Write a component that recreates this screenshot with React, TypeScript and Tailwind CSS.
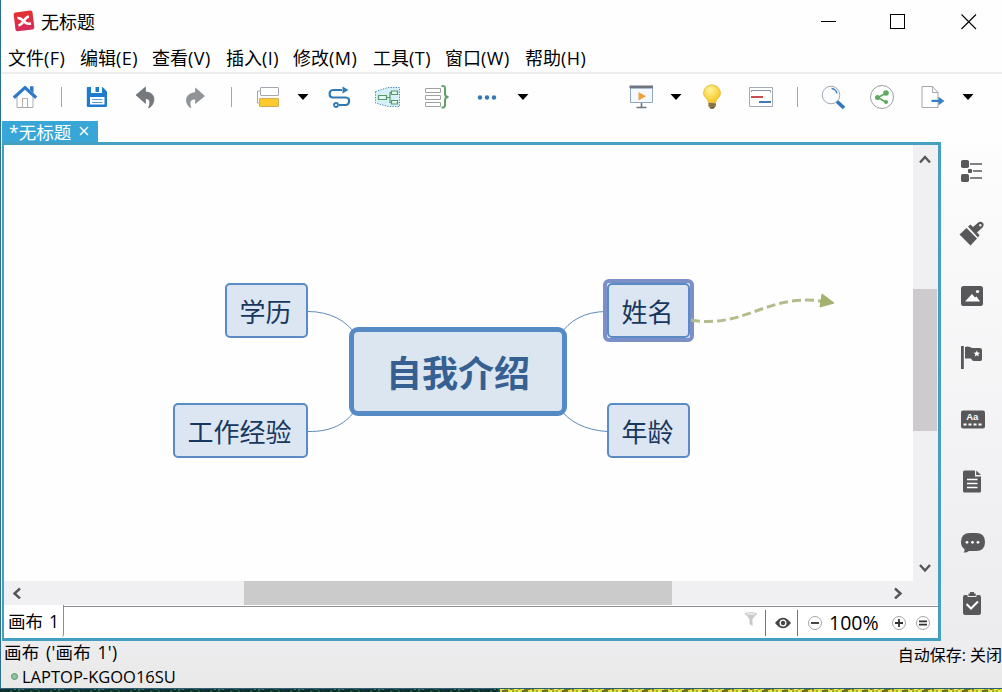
import type { ReactNode } from 'react'

const MENUS = [
  { label: '文件', hotkey: '(F)', width: 'w-[72px]' },
  { label: '编辑', hotkey: '(E)', width: 'w-[72px]' },
  { label: '查看', hotkey: '(V)', width: 'w-[74px]' },
  { label: '插入', hotkey: '(I)', width: 'w-[67px]' },
  { label: '修改', hotkey: '(M)', width: 'w-[80px]' },
  { label: '工具', hotkey: '(T)', width: 'w-[72px]' },
  { label: '窗口', hotkey: '(W)', width: 'w-[80px]' },
  { label: '帮助', hotkey: '(H)', width: 'w-[72px]' },
]

const STRIP_COLORS = ['#0d2b2c', '#12393a', '#1f5549', '#0e2e33', '#3a7761']
const STRIP_WARM = ['#d9dc3c', '#a5ac2a', '#eef04f', '#6c7524', '#dfe045']

function Ico({ w = 26, h = 26, children }: { w?: number; h?: number; children: ReactNode }) {
  return (
    <svg width={w} height={h} viewBox={`0 0 ${w} ${h}`} fill="none" className="block shrink-0">
      {children}
    </svg>
  )
}

function Caret({ className }: { className: string }) {
  return (
    <div className={className}>
      <Ico w={12} h={6}>
        <path d="M0.5 0H11.5L6 6Z" fill="#000" />
      </Ico>
    </div>
  )
}

function Divider({ className }: { className: string }) {
  return <div className={`h-5 w-px shrink-0 bg-[#a5a5a5] ${className}`} />
}

function TitleBar() {
  return (
    <div className="flex h-[43px] shrink-0 items-center pl-[12px]">
      <div className="mb-[2px]">
        <Ico w={22} h={22}>
          <defs>
            <linearGradient id="logo" x1="0" y1="0" x2="0" y2="1">
              <stop offset="0" stopColor="#e5302f" />
              <stop offset="1" stopColor="#d52c5c" />
            </linearGradient>
          </defs>
          <rect x="1.500" y="1.400" width="19" height="19" rx="2" fill="url(#logo)" transform="rotate(-7 11 11)" />
          <path d="M4.500 8C8 7.500 9.500 10 11.500 12C13 13.500 15.500 14 18 13.500M16 6.500C13 7 11.500 9.500 10 12C8.800 14 7.500 15 5.500 15.500" stroke="#fff" strokeWidth="2.600" />
        </Ico>
      </div>
      <span className="ml-[6px] text-[18px] leading-none text-black">无标题</span>
      <div className="ml-auto flex items-center">
        <Ico w={16} h={16}><path d="M0 7.500H15" stroke="#000" /></Ico>
        <div className="ml-[53px]">
          <Ico w={16} h={16}><rect x="0.5" y="0.5" width="14" height="14" stroke="#000" /></Ico>
        </div>
        <div className="mr-[25px] ml-[55px]">
          <Ico w={16} h={16}><path d="M0.500 0.500L15 15M15 0.500L0.500 15" stroke="#000" strokeWidth="1.100" /></Ico>
        </div>
      </div>
    </div>
  )
}

function MenuBar() {
  return (
    <div className="flex h-[31px] shrink-0 items-center border-b-2 border-[#eeeeee] pl-[7px] text-[18px] leading-none text-black">
      {MENUS.map((m) => (
        <div key={m.label} className={`${m.width} shrink-0 whitespace-nowrap`}>
          {m.label}
          <span className="tracking-[0.500px]">{m.hotkey}</span>
        </div>
      ))}
    </div>
  )
}

function Toolbar() {
  return (
    <div className="flex h-[47px] shrink-0 items-center pb-px pl-[11px]">
      <Ico>
        <path d="M5 12V23.500H21V12L13 4.500Z" fill="#fff" stroke="#a9adb3" />
        <path d="M10.500 23V14.500H15.500V23" stroke="#b9a9a0" />
        <path d="M1.800 13.800L13 3.600L24.200 13.800" stroke="#2e79c8" strokeWidth="3.200" />
        <path d="M18 2.200H21.500V9L18 6Z" fill="#2e79c8" />
      </Ico>
      <Divider className="ml-[23px]" />
      <div className="ml-[22px]">
        <Ico>
          <path d="M3.500 3H18.500L23 7.500V21.500Q23 23 21.500 23H4Q2.800 23 2.800 21.800V3.800Q2.800 3 3.500 3Z" fill="#1e7bd0" />
          <path d="M7 3H18V9H7Z" fill="#fff" />
          <path d="M11.500 3H15V8H11.500Z" fill="#1e7bd0" />
          <path d="M6 13H20.500V20.500H6Z" fill="#fff" />
          <path d="M8 15.500H18.500M8 18.500H18.500" stroke="#5b9bd8" />
        </Ico>
      </div>
      <div className="ml-[25px]">
        <Ico w={22} h={26}>
          <path d="M1 11L10.500 3V8C18 8 21 14 17.500 20.500Q16 23 13.500 24C16 18.500 15 14.500 10.500 14.500V19.500Z" fill="#75787c" stroke="#626569" strokeWidth="0.600" />
        </Ico>
      </div>
      <div className="ml-[27px]">
        <Ico w={22} h={26}>
          <path d="M20.500 12L11.500 4V8.500C4 9 0.500 14 3.500 20.500Q4.800 23 7 23.500C5 18.500 6 15 11.500 15V19.500Z" fill="#919497" stroke="#84878a" strokeWidth="0.600" />
        </Ico>
      </div>
      <Divider className="ml-[25px]" />
      <div className="ml-[23px]">
        <Ico w={25} h={26}>
          <path d="M5.500 7H2.500V19H5" stroke="#a6a6aa" />
          <rect x="5.500" y="3.500" width="18" height="8" rx="0.500" fill="#fff" stroke="#a4a8b2" />
          <rect x="4.500" y="14.500" width="19" height="8" rx="0.500" fill="#fbca2e" stroke="#d1ac53" />
        </Ico>
      </div>
      <Caret className="ml-[17px]" />
      <div className="ml-[18px]">
        <Ico>
          <path d="M15 6H6C1.500 6 1.500 13.500 6 13.500H19C23.500 13.500 23 21 18.500 21H12" stroke="#3079b4" strokeWidth="2.200" />
          <path d="M15.500 2.500L21.500 6L15.500 9.500Z" fill="#3079b4" />
          <circle cx="9" cy="21" r="2" fill="#fff" stroke="#3079b4" strokeWidth="1.800" />
        </Ico>
      </div>
      <div className="ml-[21px]">
        <Ico>
          <path d="M1.500 7.500L14 3.500H25.500V22.500H14L1.500 19Z" fill="#d6effa" stroke="#438eb6" strokeDasharray="1.300 1.300" />
          <path d="M12.500 13.500H16M20 8.500H16V18.500H19" stroke="#559a60" strokeWidth="1.200" />
          <path d="M4.500 11.500H12.500V15.500H4.500ZM17.500 7H23.500V10.500H17.500ZM17.500 16.500H23.500V20H17.500Z" fill="#e3f5f8" stroke="#559a60" strokeWidth="1.200" />
        </Ico>
      </div>
      <div className="ml-[24px]">
        <Ico>
          <path d="M1.500 4.500H16.500V8.500H1.500ZM1.500 11.500H16.500V15.500H1.500ZM1.500 18.500H16.500V22.500H1.500Z" stroke="#a1a1a1" />
          <path d="M17.500 2Q21 1.500 21 4V10Q21 13 24.500 13Q21 13 21 16V21Q21 24 17.500 23.500" stroke="#60a164" strokeWidth="2" />
        </Ico>
      </div>
      <div className="ml-[27px]">
        <Ico w={20} h={26}>
          <circle cx="3" cy="13.500" r="2.200" fill="#3777b3" />
          <circle cx="10" cy="13.500" r="2.200" fill="#3777b3" />
          <circle cx="17" cy="13.500" r="2.200" fill="#3777b3" />
        </Ico>
      </div>
      <Caret className="ml-[20px]" />

      <div className="mr-[28px] ml-auto flex items-center">
        <div className="mr-px">
          <Ico>
            <path d="M2.500 4H24.500V18.500H2.500Z" fill="#f3f9ff" stroke="#91a6ba" />
            <path d="M1.500 1.500H25V4.200H1.500Z" fill="#6d7583" />
            <path d="M10.500 8V16.500L18 12.300Z" fill="#eea137" />
            <path d="M13.500 19V23.500M8.500 23.500H18.500" stroke="#6d7583" strokeWidth="1.600" />
          </Ico>
        </div>
        <Caret className="ml-[15px]" />
        <div className="ml-[17px]">
          <Ico>
            <defs>
              <radialGradient id="bulb" cx="0.4" cy="0.3" r="0.700">
                <stop offset="0" stopColor="#fff49b" />
                <stop offset="1" stopColor="#f8c51e" />
              </radialGradient>
            </defs>
            <path d="M9.500 18.500C9.500 14.500 4.500 13.500 4.500 9.300A8.500 8.500 0 0 1 21.500 9.300C21.500 13.500 16.800 14.500 16.800 18.500Z" fill="url(#bulb)" stroke="#ddae2e" strokeWidth="0.700" />
            <path d="M9.500 19H16.800V22L14.500 24.700H11.500L9.500 22Z" fill="#5e5738" />
            <path d="M9.500 20.300L16.800 19.600M9.700 22.500L16.500 21.700" stroke="#b89d4c" />
          </Ico>
        </div>
        <div className="ml-[23px]">
          <Ico>
            <path d="M1.500 3.500H24.500V22.500H1.500Z" fill="#fff" stroke="#a4aab7" />
            <path d="M3.500 8V6.500H22.500V8.500" stroke="#8b94a6" />
            <path d="M3 13H15" stroke="#ca4c52" strokeWidth="2" />
            <path d="M11 18H23" stroke="#407eb2" strokeWidth="2" />
          </Ico>
        </div>
        <Divider className="ml-[23px]" />
        <div className="ml-[23px]">
          <Ico>
            <circle cx="10" cy="11" r="8.800" fill="#fbfcfe" stroke="#a3a7b5" />
            <path d="M10.500 4.500Q15 5 16 9.500" stroke="#3d80bd" strokeWidth="1.300" />
            <path d="M16 17.500L23 24" stroke="#2d78b9" strokeWidth="3.600" />
          </Ico>
        </div>
        <div className="ml-[22px]">
          <Ico>
            <circle cx="13" cy="13" r="11.500" fill="#fff" stroke="#9ba0a0" />
            <path d="M16.500 9.500L9 13.500L16.500 18" stroke="#5dab5f" strokeWidth="1.600" />
            <circle cx="17" cy="9" r="2.800" fill="#5dab5f" />
            <circle cx="8.500" cy="13.500" r="2.500" fill="#5dab5f" />
            <circle cx="17" cy="18" r="2.100" fill="#5dab5f" />
          </Ico>
        </div>
        <div className="ml-[25px]">
          <Ico>
            <path d="M2 2.500H12.500L18 8.500V23.500H2Z" fill="#fff" stroke="#a6a6ae" />
            <path d="M12.500 2.500V8.500H18" stroke="#a6a6ae" />
            <path d="M11.500 15.800H18.500V12.800L24.500 17L18.500 21.200V18H11.500Z" fill="#3680c7" />
          </Ico>
        </div>
        <Caret className="ml-[16px]" />
      </div>
    </div>
  )
}

function Topic({ className, children }: { className: string; children: ReactNode }) {
  return (
    <div className={`absolute flex h-[55px] items-center justify-center rounded-[5px] border-2 border-[#5a8bc5] bg-[#dce6f2] pt-[2px] pr-[2px] text-[26px] leading-none text-[#17375e] ${className}`}>
      <span>{children}</span>
    </div>
  )
}

function MindMap() {
  return (
    <div className="relative min-w-0 flex-1 overflow-hidden bg-[#fefefe]">
      <svg className="absolute inset-0" width="909" height="436" fill="none">
        <path d="M304 166.500C326 166.500 343 176 352 190M304 286.500C328 287 343 278 352 264M603 166.500C580 166.500 565 176 556 190M603 286.500C580 285 565 276 556 264" stroke="#5f8abb" />
      </svg>
      <Topic className="top-[138px] left-[221px] w-[83px]">学历</Topic>
      <Topic className="top-[258px] left-[169px] w-[135px]">工作经验</Topic>
      <div className="absolute top-[134px] left-[599px] h-[63px] w-[91px] rounded-[6px] border-4 border-[#7b90c8] bg-[#eef5ff]" />
      <Topic className="top-[138px] left-[603px] w-[83px]">姓名</Topic>
      <Topic className="top-[258px] left-[603px] w-[83px]">年龄</Topic>
      <div className="absolute top-[182px] left-[345px] flex h-[89px] w-[218px] items-center justify-center rounded-[9px] border-[5px] border-[#558ac4] bg-[#dbe6f1] pt-[5px] text-[36px] leading-none font-bold text-[#376092]">
        <span>自我介绍</span>
      </div>
      <svg className="absolute inset-0" width="909" height="436" fill="none">
        <path d="M687 175C740 184 762 149 817 156" stroke="#b3bd8b" strokeWidth="3" strokeDasharray="9 4" />
        <path d="M818 149L830 158L816 162Z" fill="#a3b16f" stroke="#a3b16f" />
      </svg>
    </div>
  )
}

function Arrow({ d }: { d: string }) {
  return (
    <Ico w={12} h={12}>
      <path d={d} stroke="#56565a" strokeWidth="2.400" />
    </Ico>
  )
}

function SheetBar() {
  return (
    <div className="flex h-[33px] shrink-0 bg-white">
      <div className="flex h-[32px] w-[60px] items-center rounded-br-[3px] border-r border-[#8e8e8e] pt-px pl-[4px] text-[17.500px] leading-none whitespace-nowrap text-black [word-spacing:1.500px]">
        画布 1
      </div>
      <div className="mt-px flex flex-1 items-center border-t border-[#8e8e8e]">
        <div className="mb-[8px] ml-auto">
          <Ico w={16} h={16}>
            <path d="M1.500 2H14.500L9.500 8V15L6.500 13V8Z" fill="#c9c9cc" />
            <ellipse cx="8" cy="3" rx="5.500" ry="1.300" fill="#f2f2f2" stroke="#c9c9cc" />
          </Ico>
        </div>
        <div className="ml-[6px] h-[26px] w-px bg-[#777777]" />
        <div className="ml-[8px]">
          <Ico w={18} h={14}>
            <path d="M1 7Q9 -3.500 17 7Q9 17.500 1 7Z" fill="#46464a" />
            <circle cx="9" cy="7" r="3.500" fill="#fff" />
            <circle cx="9" cy="7" r="2.200" fill="#46464a" />
          </Ico>
        </div>
        <div className="ml-[5px] h-[26px] w-px bg-[#777777]" />
        <div className="ml-[9px]">
          <Ico w={16} h={16}>
            <circle cx="8" cy="8" r="6.500" fill="#fff" stroke="#a5a5a5" />
            <path d="M4 8H12" stroke="#333" strokeWidth="1.800" />
          </Ico>
        </div>
        <span className="ml-[6px] w-[55px] text-[19.500px] leading-none text-black">100%</span>
        <div className="ml-[7px]">
          <Ico w={16} h={16}>
            <circle cx="8" cy="8" r="6.500" fill="#fff" stroke="#a5a5a5" />
            <path d="M4 8H12M8 4V12" stroke="#333" strokeWidth="1.800" />
          </Ico>
        </div>
        <div className="mr-[7px] ml-[8px]">
          <Ico w={16} h={16}>
            <circle cx="8" cy="8" r="6.500" fill="#fff" stroke="#a5a5a5" />
            <path d="M4 6.300H12M4 9.700H12" stroke="#333" strokeWidth="1.700" />
          </Ico>
        </div>
      </div>
    </div>
  )
}

function Editor() {
  return (
    <div className="ml-px flex w-[939px] shrink-0 flex-col border-[3px] border-l-2 border-[#459fc1] bg-white">
      <div className="flex h-[436px] shrink-0">
        <MindMap />
        <div className="flex w-[25px] flex-col items-center bg-[#f0eff2] pt-[8px] pr-px pb-[7px]">
          <Arrow d="M1 9.500L6 4L11 9.500" />
          <div className="mt-[124px] h-[142px] w-[24px] shrink-0 bg-[#cdcbce]" />
          <div className="mt-auto"><Arrow d="M1 3L6 8.500L11 3" /></div>
        </div>
      </div>
      <div className="flex h-[24px] shrink-0 items-center bg-[#f0eff1] pl-[7px]">
        <Arrow d="M9 1.500L3.500 6.500L9 11.500" />
        <div className="ml-[221px] h-[24px] w-[428px] bg-[#cbcbcb]" />
        <div className="ml-[220px]"><Arrow d="M3 1.500L8.500 6.500L3 11.500" /></div>
      </div>
      <SheetBar />
    </div>
  )
}

const DARK = '#58585b'

function SideBar() {
  return (
    <div className="flex flex-1 flex-col items-center bg-linear-to-b from-[#fdfdfe] to-[#ececee] pt-[17px] pl-[1px]">
      <div className="h-[62px]">
        <Ico>
          <rect x="2" y="1" width="8" height="8" rx="1.800" fill={DARK} />
          <rect x="2" y="15" width="8" height="8" rx="1.800" fill={DARK} />
          <rect x="9" y="10" width="4" height="4" rx="1" fill={DARK} />
          <path d="M11 5H23M14 12H23M11 19H23" stroke={DARK} strokeWidth="1.700" />
        </Ico>
      </div>
      <div className="h-[62px]">
        <Ico>
          <path d="M0.500 13.500L7.500 7L18 17.500L11.500 24.500Z" fill={DARK} />
          <path d="M9 5.500L11.500 3.500L14 6L19.500 1.200Q22 0 24 2Q25.500 4 23.500 6.500L18 11.500L20.500 14L19 16.500Z" fill={DARK} />
          <circle cx="21.300" cy="4.300" r="1.200" fill="#eee" />
        </Ico>
      </div>
      <div className="h-[62px]">
        <Ico>
          <rect x="2" y="3" width="22" height="20" rx="2.500" fill={DARK} />
          <path d="M6 18.500L13 11L16 14.500L17.500 13.500L21 18.500Z" fill="#fff" />
          <circle cx="18.500" cy="8.500" r="1.600" fill="#fff" />
        </Ico>
      </div>
      <div className="h-[62px]">
        <Ico>
          <path d="M2 1H4.800V24H2Z" fill={DARK} />
          <path d="M6 2Q9.500 0.500 13 3H21Q23 3 23 5V14.500Q23 16 21 16H15Q13 16 12 13.500H6Z" fill={DARK} />
          <path d="M17.800 5.500L18.700 7.600L21 7.800L19.300 9.200L19.800 11.500L17.800 10.300L15.800 11.500L16.300 9.200L14.600 7.800L16.900 7.600Z" fill="#fff" />
        </Ico>
      </div>
      <div className="h-[62px]">
        <Ico>
          <rect x="2" y="3.500" width="24" height="18" rx="2" fill={DARK} />
          <text x="13.300" y="13" fill="#fff" fontSize="9.500" fontFamily="Liberation Sans, sans-serif" fontWeight="bold" textAnchor="middle">Aa</text>
          <path d="M4.500 17.500H22.500" stroke="#fff" strokeWidth="2" strokeDasharray="3 2" />
        </Ico>
      </div>
      <div className="h-[61px]">
        <Ico>
          <path d="M5.500 1.500H16V7.500H22V22Q22 23.500 20.500 23.500H5.500Q4 23.500 4 22V3Q4 1.500 5.500 1.500Z" fill={DARK} />
          <path d="M17.200 1.500L22 6H17.200Z" fill={DARK} />
          <path d="M8 10.500H18.500M8 14.500H18.500M8 18.500H18.500" stroke="#fff" strokeWidth="1.300" />
        </Ico>
      </div>
      <div className="h-[61px]">
        <Ico>
          <path d="M11 3H17Q26 3 26 12Q26 21 17 21H10Q7.500 23 4.500 22.500Q6 21 5.500 19Q2 17 2 12Q2 3 11 3Z" fill={DARK} />
          <circle cx="8" cy="12.300" r="1.400" fill="#fff" />
          <circle cx="13.500" cy="12.300" r="1.400" fill="#fff" />
          <circle cx="19" cy="12.300" r="1.400" fill="#fff" />
        </Ico>
      </div>
      <Ico>
        <path d="M6 4H8.500V6H17.500V4H20Q22 4 22 6V22Q22 24 20 24H6Q4 24 4 22V6Q4 4 6 4Z" fill={DARK} />
        <path d="M9.500 2.500H11V1H15V2.500H16.700V5H9.500Z" fill={DARK} />
        <path d="M7.500 13L12 17.500L19 10.500" stroke="#fff" strokeWidth="2" />
      </Ico>
    </div>
  )
}

function StatusBar() {
  return (
    <div className="flex h-[47px] shrink-0 justify-between bg-linear-to-b from-[#ededef] to-[#e9e9e9] text-black">
      <div className="flex flex-col pl-[3px]">
        <div className="flex h-[24px] items-center text-[17.500px] leading-none">
          <span className="tracking-[0.3px] [word-spacing:1.500px]">画布 (&apos;画布 1&apos;)</span>
        </div>
        <div className="flex h-[24px] items-center pt-[3px] pl-[7px] text-[16.500px] leading-none">
          <div className="mr-[4px] mb-[2px] h-[7px] w-[7px] rounded-full border border-[#52976a] bg-[#8fc29d]" />
          LAPTOP-KGOO16SU
        </div>
      </div>
      <div className="flex h-[27px] items-center text-[16px] leading-none whitespace-nowrap">自动保存: 关闭</div>
    </div>
  )
}

// Sliver of the desktop wallpaper below the window
function DesktopStrip() {
  return (
    <svg width="1002" height="4" className="block shrink-0">
      <rect width="1002" height="4" fill="#2f5f70" />
      {Array.from({ length: 501 }, (_, i) => {
        const palette = i > 249 ? STRIP_WARM : STRIP_COLORS
        return (
          <g key={i}>
            <rect x={i * 2} y="1" width="2" height="1" fill={palette[(i * i * 7 + (i >> 2)) % 5]} />
            <rect x={i * 2} y="2" width="2" height="2" fill={palette[(i * i * 3 + (i >> 1)) % 5]} />
          </g>
        )
      })}
    </svg>
  )
}

export default function App() {
  return (
    <div className="flex h-[692px] w-[1002px] flex-col overflow-hidden bg-[#fefefe] font-['Open_Sans','Noto_Sans_CJK_SC',sans-serif]">
      <div className="flex h-[688px] shrink-0 flex-col border-l border-[#2d6f8e]">
        <TitleBar />
        <MenuBar />
        <Toolbar />
        <div className="flex h-[21px] shrink-0 pl-px">
          <div className="flex w-[96px] items-center bg-[#38a7d8] pt-[3px] pl-[7px] text-[17.500px] leading-none whitespace-nowrap text-white">
            *无标题
            <div className="mb-[5px] ml-[8px]">
              <Ico w={10} h={10}><path d="M1 1L9 9M9 1L1 9" stroke="#fff" strokeWidth="1.500" /></Ico>
            </div>
          </div>
        </div>
        <div className="flex h-[499px] shrink-0">
          <Editor />
          <SideBar />
        </div>
        <StatusBar />
      </div>
      <DesktopStrip />
    </div>
  )
}
